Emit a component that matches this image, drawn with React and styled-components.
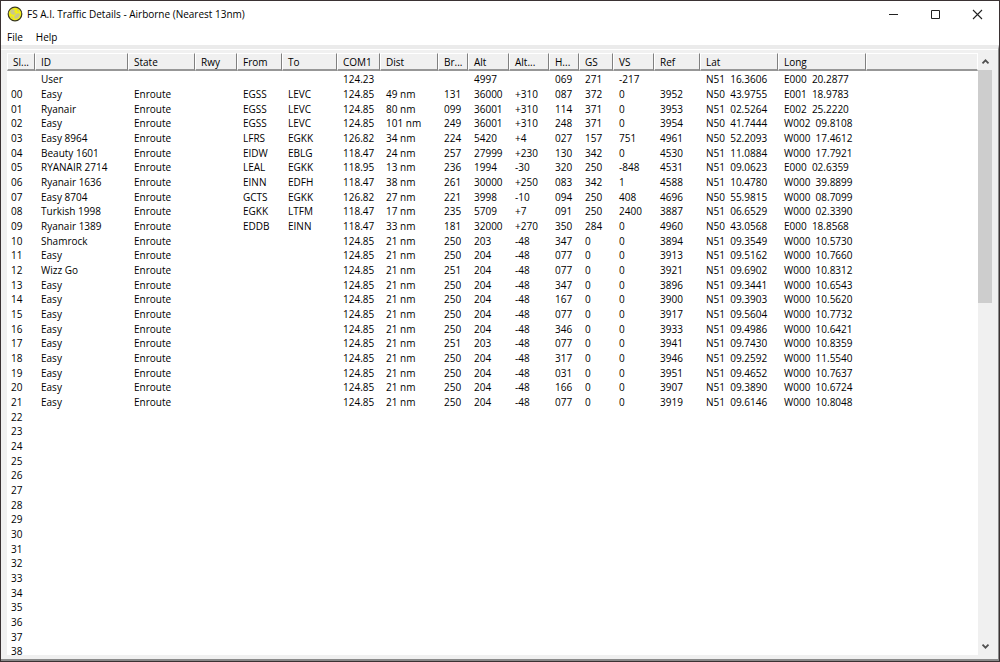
import { useState } from "react";
import styled, { createGlobalStyle } from "styled-components";

const GlobalStyle = createGlobalStyle`
  * {
    box-sizing: border-box;
  }

  body {
    margin: 0;
    background-color: #fff;
    font-family: "Open Sans", "Noto Sans", sans-serif;
    font-size: 10px;
    color: #000;
  }
`;

const Window = styled.div`
  display: flex;
  flex-direction: column;
  height: 100vh;
  overflow: hidden;
  border: 1px solid #3a3233;
  background-color: #fff;
`;

const TitleBar = styled.header`
  display: flex;
  align-items: center;
  flex: none;
  height: 26px;
  padding: 0 1px 0 6px;
`;

const Title = styled.h1`
  flex: 1;
  margin: 0 0 0 4px;
  font-size: 10px;
  font-weight: 400;
  line-height: 16px;
  white-space: nowrap;
`;

const CaptionButton = styled.button`
  display: flex;
  align-items: center;
  justify-content: center;
  width: 42px;
  height: 26px;
  padding: 0;
  border: none;
  background-color: transparent;

  &:hover {
    background-color: #e5e5e5;
  }
`;

const MenuBar = styled.nav`
  display: flex;
  flex: none;
  height: 18px;
`;

const MenuButton = styled.button`
  padding: 2px 7px 0 6px;
  border: none;
  background-color: transparent;
  color: inherit;
  font: inherit;
  line-height: 16px;

  &:hover {
    background-color: #e5f3ff;
  }
`;

const Client = styled.main`
  display: flex;
  flex: 1;
  min-height: 0;
  padding: 4px 5px 4px 6px;
  border-style: solid;
  border-width: 4px 1px 2px 0;
  border-color: #ebebeb #8a8a8a #8a8a8a #fff;
  background-color: #f0f0f0;
  box-shadow: inset 0 1px 0 #fff;
`;

const ListView = styled.div`
  flex: 1;
  min-width: 0;
  overflow: hidden;
  background-color: #fff;
`;

const Table = styled.table`
  width: 100%;
  table-layout: fixed;
  border-collapse: separate;
  border-spacing: 0;
`;

const Column = styled.col`
  width: ${(props) => (props.$width ? `${props.$width}px` : "auto")};
`;

const HeaderCell = styled.th`
  height: 18px;
  padding: 2px 0 0 5px;
  border-style: solid;
  border-width: 1px 1px 2px 1px;
  border-color: #fff #808080 #979797 #fff;
  background-color: #f0f0f0;
  font-weight: 400;
  line-height: 13px;
  text-align: left;
  white-space: nowrap;

  &:last-child {
    border-right-color: #fff;
  }
`;

const Spacer = styled.tr`
  height: 1px;

  td {
    padding: 0;
  }
`;

// rows run 14, 15, 15 px so the list keeps an even pitch
const Row = styled.tr`
  height: 15px;

  &:nth-child(3n + 1) {
    height: 14px;
  }
`;

const Cell = styled.td`
  padding: 0 0 0 6px;
  line-height: 14px;
  white-space: pre;

  &:first-child {
    padding-left: 4px;
  }
`;

const ScrollBar = styled.div`
  display: flex;
  flex-direction: column;
  flex: none;
  width: 15px;
  padding-right: 1px;
  background-color: #f0f0f0;
`;

const ScrollButton = styled.button`
  display: flex;
  align-items: center;
  justify-content: center;
  flex: none;
  height: 17px;
  padding: 0;
  border: none;
  background-color: transparent;
`;

const Track = styled.div`
  flex: 1;
`;

const Thumb = styled.div`
  height: 41%;
  background-color: #cdcdcd;
`;

const columns = [
  { label: "Sl...", width: 28 },
  { label: "ID", width: 93 },
  { label: "State", width: 67 },
  { label: "Rwy", width: 42 },
  { label: "From", width: 45 },
  { label: "To", width: 55 },
  { label: "COM1", width: 43 },
  { label: "Dist", width: 58 },
  { label: "Br...", width: 30 },
  { label: "Alt", width: 41 },
  { label: "Alt...", width: 40 },
  { label: "H...", width: 30 },
  { label: "GS", width: 34 },
  { label: "VS", width: 41 },
  { label: "Ref", width: 46 },
  { label: "Lat", width: 78 },
  { label: "Long", width: 88 },
  { label: "" },
];

const traffic = `
|User|||||124.23|||4997||069|271|-217||N51  16.3606|E000  20.2877
00|Easy|Enroute||EGSS|LEVC|124.85|49 nm|131|36000|+310|087|372|0|3952|N50  43.9755|E001  18.9783
01|Ryanair|Enroute||EGSS|LEVC|124.85|80 nm|099|36001|+310|114|371|0|3953|N51  02.5264|E002  25.2220
02|Easy|Enroute||EGSS|LEVC|124.85|101 nm|249|36001|+310|248|371|0|3954|N50  41.7444|W002  09.8108
03|Easy 8964|Enroute||LFRS|EGKK|126.82|34 nm|224|5420|+4|027|157|751|4961|N50  52.2093|W000  17.4612
04|Beauty 1601|Enroute||EIDW|EBLG|118.47|24 nm|257|27999|+230|130|342|0|4530|N51  11.0884|W000  17.7921
05|RYANAIR 2714|Enroute||LEAL|EGKK|118.95|13 nm|236|1994|-30|320|250|-848|4531|N51  09.0623|E000  02.6359
06|Ryanair 1636|Enroute||EINN|EDFH|118.47|38 nm|261|30000|+250|083|342|1|4588|N51  10.4780|W000  39.8899
07|Easy 8704|Enroute||GCTS|EGKK|126.82|27 nm|221|3998|-10|094|250|408|4696|N50  55.9815|W000  08.7099
08|Turkish 1998|Enroute||EGKK|LTFM|118.47|17 nm|235|5709|+7|091|250|2400|3887|N51  06.6529|W000  02.3390
09|Ryanair 1389|Enroute||EDDB|EINN|118.47|33 nm|181|32000|+270|350|284|0|4960|N50  43.0568|E000  18.8568
10|Shamrock|Enroute||||124.85|21 nm|250|203|-48|347|0|0|3894|N51  09.3549|W000  10.5730
11|Easy|Enroute||||124.85|21 nm|250|204|-48|077|0|0|3913|N51  09.5162|W000  10.7660
12|Wizz Go|Enroute||||124.85|21 nm|251|204|-48|077|0|0|3921|N51  09.6902|W000  10.8312
13|Easy|Enroute||||124.85|21 nm|250|204|-48|347|0|0|3896|N51  09.3441|W000  10.6543
14|Easy|Enroute||||124.85|21 nm|250|204|-48|167|0|0|3900|N51  09.3903|W000  10.5620
15|Easy|Enroute||||124.85|21 nm|250|204|-48|077|0|0|3917|N51  09.5604|W000  10.7732
16|Easy|Enroute||||124.85|21 nm|250|204|-48|346|0|0|3933|N51  09.4986|W000  10.6421
17|Easy|Enroute||||124.85|21 nm|251|203|-48|077|0|0|3941|N51  09.7430|W000  10.8359
18|Easy|Enroute||||124.85|21 nm|250|204|-48|317|0|0|3946|N51  09.2592|W000  11.5540
19|Easy|Enroute||||124.85|21 nm|250|204|-48|031|0|0|3951|N51  09.4652|W000  10.7637
20|Easy|Enroute||||124.85|21 nm|250|204|-48|166|0|0|3907|N51  09.3890|W000  10.6724
21|Easy|Enroute||||124.85|21 nm|250|204|-48|077|0|0|3919|N51  09.6146|W000  10.8048
`
  .trim()
  .split("\n")
  .map((line) => line.split("|"));

// slots with no aircraft only show their number
const emptySlots = Array.from({ length: 17 }, (_, i) => [String(22 + i)]);

const rows = [...traffic, ...emptySlots];

function AppIcon() {
  return (
    <svg width="16" height="16" viewBox="0 0 16 16" aria-hidden="true">
      <circle cx="8" cy="8" r="6.8" fill="#f2ee16" stroke="#3b3a20" strokeWidth="1.2" />
      <path d="M5 3l3 1-1 2 2 1-2 2-3-1-1-3z" fill="#c9c78c" />
      <path d="M9 8l3-1 1 2-2 3-3 1-1-2z" fill="#c9c78c" />
      <path d="M10 3l2 1v2l-2-1zM4 10l2 1v2l-2-1z" fill="#d2d06a" />
    </svg>
  );
}

function Chevron({ down }) {
  return (
    <svg width="9" height="7" viewBox="0 0 9 7" aria-hidden="true">
      <path
        d={down ? "M1.5 1.7l3 3 3-3" : "M1.5 5.3l3-3 3 3"}
        fill="none"
        stroke="#505050"
        strokeWidth="1.8"
      />
    </svg>
  );
}

function App() {
  const [selected, setSelected] = useState(null);

  return (
    <>
      <GlobalStyle />
      <Window>
        <TitleBar>
          <AppIcon />
          <Title>FS A.I. Traffic Details - Airborne (Nearest 13nm)</Title>
          <CaptionButton aria-label="Minimize">
            <svg width="11" height="11" viewBox="0 0 11 11">
              <path d="M1 5.5h9" stroke="#222" />
            </svg>
          </CaptionButton>
          <CaptionButton aria-label="Maximize">
            <svg width="11" height="11" viewBox="0 0 11 11">
              <path d="M1.5 1.5h8v8h-8z" fill="none" stroke="#222" />
            </svg>
          </CaptionButton>
          <CaptionButton aria-label="Close">
            <svg width="11" height="11" viewBox="0 0 11 11">
              <path d="M1 1l9 9M10 1l-9 9" stroke="#222" strokeWidth="1.1" />
            </svg>
          </CaptionButton>
        </TitleBar>
        <MenuBar>
          <MenuButton>File</MenuButton>
          <MenuButton>Help</MenuButton>
        </MenuBar>
        <Client>
          <ListView>
            <Table>
              <colgroup>
                {columns.map((column, i) => (
                  <Column key={i} $width={column.width} />
                ))}
              </colgroup>
              <thead>
                <tr>
                  {columns.map((column, i) => (
                    <HeaderCell key={i}>{column.label}</HeaderCell>
                  ))}
                </tr>
                <Spacer>
                  <td colSpan={columns.length} />
                </Spacer>
              </thead>
              <tbody>
                {rows.map((row, i) => (
                  <Row
                    key={i}
                    aria-selected={selected === i}
                    onClick={() => setSelected(i)}
                  >
                    {columns.map((column, j) => (
                      <Cell key={j}>{row[j]}</Cell>
                    ))}
                  </Row>
                ))}
              </tbody>
            </Table>
          </ListView>
          <ScrollBar>
            <ScrollButton aria-label="Scroll up">
              <Chevron />
            </ScrollButton>
            <Track>
              <Thumb />
            </Track>
            <ScrollButton aria-label="Scroll down">
              <Chevron down />
            </ScrollButton>
          </ScrollBar>
        </Client>
      </Window>
    </>
  );
}

export default App;
